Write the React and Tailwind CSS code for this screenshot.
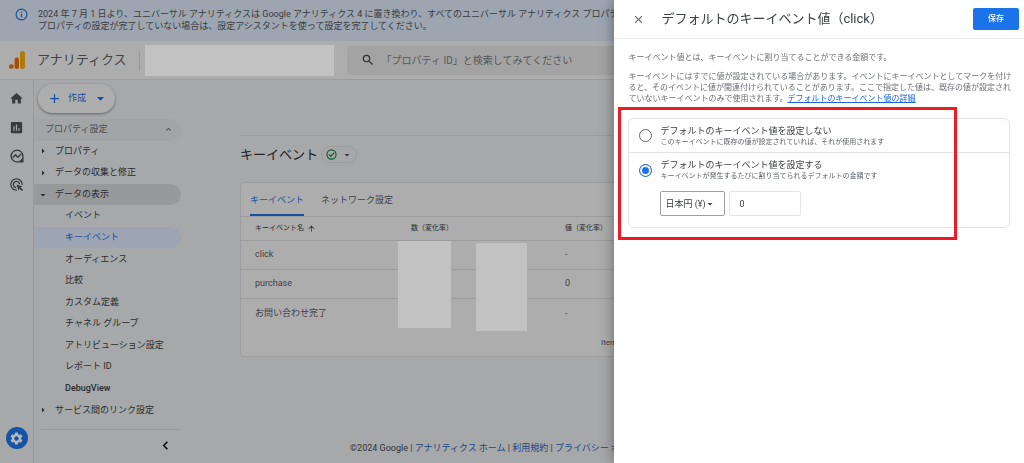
import React, { useState } from "react";
import {
  MdHome,
  MdInsertChart,
  MdSearch,
  MdSettings,
  MdAdd,
  MdArrowDropDown,
  MdArrowRight,
  MdExpandLess,
  MdChevronLeft,
  MdClose,
  MdArrowUpward,
  MdAdsClick,
} from "react-icons/md";

const subItems = [
  "イベント",
  "キーイベント",
  "オーディエンス",
  "比較",
  "カスタム定義",
  "チャネル グループ",
  "アトリビューション設定",
  "レポート ID",
  "DebugView",
];

const rows = [
  { name: "click", value: "-" },
  { name: "purchase", value: "0" },
  { name: "お問い合わせ完了", value: "-" },
];

const ExploreIcon = () => (
  <svg viewBox="0 0 24 24" className="size-[14px]" fill="none" stroke="currentColor" strokeWidth="2.4">
    <path d="M12 2a10 10 0 1 0 0 20h10V12A10 10 0 0 0 12 2Z" />
    <path d="M5 14.5l4.5-4.5 4 4L19 8.500" />
    <path d="M15 22l7-7v7Z" fill="currentColor" stroke="none" />
  </svg>
);

const CheckIcon = () => (
  <svg viewBox="0 0 24 24" className="size-[11px]" fill="none" stroke="#155a2a" strokeWidth="2.600">
    <circle cx="12" cy="12" r="10" />
    <path d="M6.500 12l4 4L18 8" />
  </svg>
);

const Banner = () => (
  <div className="flex h-[41px] shrink-0 items-start gap-[10px] bg-[#9da5b1] pt-[8px] pl-[15px] text-[9px] leading-[12px] text-[#3a3c40]">
    <svg viewBox="0 0 24 24" className="size-[13px] shrink-0" fill="none" stroke="#1c4fa0" strokeWidth="2.200">
      <circle cx="12" cy="12" r="10" />
      <path d="M12 11v6M12 7v2" />
    </svg>
    <p className="whitespace-nowrap">
      2024 年 7 月 1 日より、ユニバーサル アナリティクスは Google アナリティクス 4 に置き換わり、すべてのユニバーサル アナリティクス プロパティの完
      <br />
      プロパティの設定が完了していない場合は、設定アシスタントを使って設定を完了してください。
    </p>
  </div>
);

const Header = () => (
  <header className="flex h-[39px] shrink-0 items-center border-b border-[#9b9b9b] bg-[#adadad] pl-[9px]">
    <svg viewBox="0 0 16 18" className="h-[18px] w-[16px]">
      <rect x="11" y="0" width="5" height="18" rx="2.500" fill="#b07a08" />
      <rect x="5.500" y="6.500" width="4.500" height="11.500" rx="2.200" fill="#a55008" />
      <circle cx="2.300" cy="15.600" r="2.300" fill="#a55008" />
    </svg>
    <span className="ml-[12px] text-[13px] text-[#414447]">アナリティクス</span>
    <div className="ml-[12px] h-[19px] w-px bg-[#999]" />
    <div className="ml-[5px] h-[31px] w-[189px] bg-[#c2c2c2]" />
    <label className="ml-[13px] flex h-[29px] flex-1 items-center gap-[7px] rounded bg-[#a3a3a3] pl-[14px]">
      <MdSearch className="size-[14px] text-[#2d2f31]" />
      <input
        aria-label="検索"
        placeholder="「プロパティ ID」と検索してみてください"
        className="w-[260px] bg-transparent text-[10px] outline-none placeholder:text-[#55575a]"
      />
    </label>
  </header>
);

const Rail = () => (
  <nav className="flex w-[34px] shrink-0 flex-col items-center border-r border-[#989a9c] pt-[11px] pb-[14px] text-[#383b3e]">
    <button aria-label="ホーム"><MdHome className="size-[15px]" /></button>
    <button aria-label="レポート" className="mt-[14px]"><MdInsertChart className="size-[15px]" /></button>
    <button aria-label="探索" className="mt-[14px]"><ExploreIcon /></button>
    <button aria-label="広告" className="mt-[14px]"><MdAdsClick className="size-[15px]" /></button>
    <button
      aria-label="管理"
      className="mt-auto flex size-[22px] items-center justify-center rounded-full bg-[#1553a6] text-[#b5b8bb]"
    >
      <MdSettings className="size-[15px]" />
    </button>
  </nav>
);

const Sidebar = ({ active, setActive }) => {
  const item = "flex flex-1 items-center rounded-r-full text-left";

  return (
    <aside className="flex w-[147px] shrink-0 flex-col pt-[4px] text-[9px] text-[#2a2c2e]">
      <button className="ml-[4px] flex h-[29px] w-[77px] items-center rounded-full bg-[#adadad] pl-[9px] text-[#154f9f] shadow-[0_1px_3px_rgba(0,0,0,0.4)]">
        <MdAdd className="size-[15px]" />
        <span className="ml-[6px]">作成</span>
        <MdArrowDropDown className="ml-[6px] size-[17px]" />
      </button>

      <div className="mt-[6px] flex h-[302px] flex-col">
        <button className={item + " justify-between bg-[#a2a4a6] pr-[7px] pl-[11px] text-[#4a4d50]"}>
          プロパティ設定 <MdExpandLess className="size-[11px]" />
        </button>
        <button className={item + " gap-[6px] pl-[3px]"}>
          <MdArrowRight className="size-[12px]" /> プロパティ
        </button>
        <button className={item + " gap-[6px] pl-[3px]"}>
          <MdArrowRight className="size-[12px]" /> データの収集と修正
        </button>
        <button className={item + " gap-[6px] bg-[#98999b] pl-[3px]"}>
          <MdArrowDropDown className="size-[12px]" /> データの表示
        </button>
        {subItems.map((name) => (
          <button
            key={name}
            onClick={() => setActive(name)}
            className={
              item +
              " pl-[31px] " +
              (name === active ? "bg-[#9da5b2] text-[#1d4a9c] " : "") +
              (name === "DebugView" ? "font-medium" : "")
            }
          >
            {name}
          </button>
        ))}
        <button className={item + " gap-[6px] pl-[3px]"}>
          <MdArrowRight className="size-[12px]" /> サービス間のリンク設定
        </button>
      </div>

      <div className="mt-[8px] ml-[7px] flex justify-end border-t border-[#989a9c] pt-[7px] pr-[7px]">
        <button aria-label="折りたたむ"><MdChevronLeft className="size-[17px] text-black" /></button>
      </div>
    </aside>
  );
};

const EventTable = () => (
  <section className="relative mt-[17px] h-[175px] rounded-l border border-[#9b9c9d] bg-[#adadad] text-[#3f4144]">
    <div className="flex h-[34px] gap-[17px] border-b border-[#9b9c9d] pl-[9px] text-[9px]">
      <button className="border-b-2 border-[#1c4fa0] pt-[5px] text-[#1c4fa0]">キーイベント</button>
      <button className="border-b-2 border-transparent pt-[5px]">ネットワーク設定</button>
    </div>
    <table className="w-full table-fixed text-left text-[9px]">
      <colgroup>
        <col className="w-[170px]" />
        <col className="w-[154px]" />
        <col />
      </colgroup>
      <thead className="text-[7px] text-[#252729]">
        <tr className="h-[24px] border-b border-[#9b9c9d]">
          <th className="pl-[14px] font-normal">
            <span className="flex items-center gap-[3px]">
              キーイベント名 <MdArrowUpward className="size-[9px]" />
            </span>
          </th>
          <th className="font-normal">数（変化率）</th>
          <th className="font-normal">値（変化率）</th>
        </tr>
      </thead>
      <tbody>
        {rows.map((row) => (
          <tr key={row.name} className="h-[29px] border-b border-[#9b9c9d] last:border-b-0">
            <td className="pl-[14px]">{row.name}</td>
            <td></td>
            <td>{row.value}</td>
          </tr>
        ))}
      </tbody>
    </table>
    <p className="pt-[9px] pl-[360px] text-[8px] leading-[12px] whitespace-nowrap">Items per page:</p>

    {/* Masked numbers */}
    <div className="absolute top-[58px] left-[157px] h-[87px] w-[53px] bg-[#c2c2c2]" />
    <div className="absolute top-[60px] left-[235px] h-[88px] w-[51px] bg-[#c2c2c2]" />
  </section>
);

const Footer = () => (
  <footer className="mt-auto mb-[8px] pl-[110px] text-[9px] leading-[14px] whitespace-nowrap text-[#303236]">
    ©2024 Google |{" "}
    <a href="#home" className="text-[#1c4583]">アナリティクス ホーム</a> |{" "}
    <a href="#terms" className="text-[#1c4583]">利用規約</a> |{" "}
    <a href="#privacy" className="text-[#1c4583]">プライバシー ポリシー</a>
  </footer>
);

const Drawer = () => {
  const [mode, setMode] = useState("set");
  const radio =
    "size-[13px] shrink-0 appearance-none rounded-full border border-[#5f6368] checked:border-[#1a73e8] checked:bg-[#1a73e8] checked:shadow-[inset_0_0_0_2px_white]";

  return (
    <aside className="fixed inset-y-0 right-0 w-2/5 bg-white text-[#3c4043] shadow-[0_0_14px_rgba(0,0,0,0.4)]">
      <div className="flex h-[39px] items-center border-b border-[#e8eaed] pr-[5px] pl-[18px]">
        <button aria-label="閉じる"><MdClose className="size-[13px] text-[#5f6368]" /></button>
        <h2 className="ml-[16px] text-[13px]">デフォルトのキーイベント値（click）</h2>
        <button className="ml-auto h-[22px] w-[46px] rounded-xs bg-[#1a73e8] text-[8px] font-medium text-white">保存</button>
      </div>

      <div className="pt-[13px] pr-[14px] pl-[14px]">
        <div className="text-[8px] leading-[11px] text-[#6a6e73]">
          <p>キーイベント値とは、キーイベントに割り当てることができる金額です。</p>
          <p className="mt-[8px] whitespace-nowrap">
            キーイベントにはすでに値が設定されている場合があります。イベントにキーイベントとしてマークを付け
            <br />
            ると、そのイベントに値が関連付けられていることがあります。ここで指定した値は、既存の値が設定され
            <br />
            ていないキーイベントのみで使用されます。
            <a href="#details" className="text-[#1967d2] underline">デフォルトのキーイベント値の詳細</a>
          </p>
        </div>

        <div className="mt-[14px] rounded-md border border-[#e3e5e8] text-[9px] leading-[12px]">
          <label className="flex h-[34px] items-center gap-[8px] border-b border-[#e3e5e8] pl-[10px]">
            <input type="radio" name="mode" checked={mode === "none"} onChange={() => setMode("none")} className={radio} />
            <span>
              デフォルトのキーイベント値を設定しない
              <span className="block text-[7px] leading-[10px] text-[#5f6368]">
                このキーイベントに既存の値が設定されていれば、それが使用されます
              </span>
            </span>
          </label>
          <label className="flex h-[34px] items-center gap-[8px] pl-[10px]">
            <input type="radio" name="mode" checked={mode === "set"} onChange={() => setMode("set")} className={radio} />
            <span>
              デフォルトのキーイベント値を設定する
              <span className="block text-[7px] leading-[10px] text-[#5f6368]">
                キーイベントが発生するたびに割り当てられるデフォルトの金額です
              </span>
            </span>
          </label>
          <div className="mt-[4px] mb-[11px] flex gap-[4px] pl-[31px]">
            <div className="relative">
              <select aria-label="通貨" className="h-[25px] w-[65px] appearance-none rounded-xs border border-[#9aa0a6] pl-[4px]">
                <option>日本円 (¥)</option>
              </select>
              <MdArrowDropDown className="pointer-events-none absolute top-[7px] right-[9px] size-[12px]" />
            </div>
            <input
              aria-label="値"
              defaultValue="0"
              className="h-[25px] w-[72px] rounded-xs border border-[#e3e5e8] pl-[9px]"
            />
          </div>
        </div>
      </div>

      {/* Highlight frame */}
      <div className="pointer-events-none absolute top-[107px] left-[4px] h-[133px] w-[339px] border-3 border-[#ed1c24]" />
    </aside>
  );
};

export default function App() {
  const [active, setActive] = useState("キーイベント");

  return (
    <div className="flex min-h-screen flex-col overflow-hidden bg-[#a6a8aa] font-[Roboto,'Noto_Sans_CJK_JP',sans-serif]">
      <Banner />
      <Header />
      <div className="flex flex-1">
        <Rail />
        <Sidebar active={active} setActive={setActive} />
        <main className="flex min-w-0 flex-1 flex-col pt-[55px] pl-[59px]">
          <div className="flex items-center gap-[3px] border-t border-[#9b9c9d] pt-[9px]">
            <h1 className="text-[13px] text-[#1f2123]">キーイベント</h1>
            <button
              aria-label="ステータス"
              className="flex h-[17px] w-[36px] items-center gap-[4px] rounded-full border border-[#999b9d] pl-[4px] text-[#3a3c3f]"
            >
              <CheckIcon />
              <MdArrowDropDown className="size-[12px]" />
            </button>
          </div>
          <EventTable />
          <Footer />
        </main>
      </div>
      <Drawer />
    </div>
  );
}
